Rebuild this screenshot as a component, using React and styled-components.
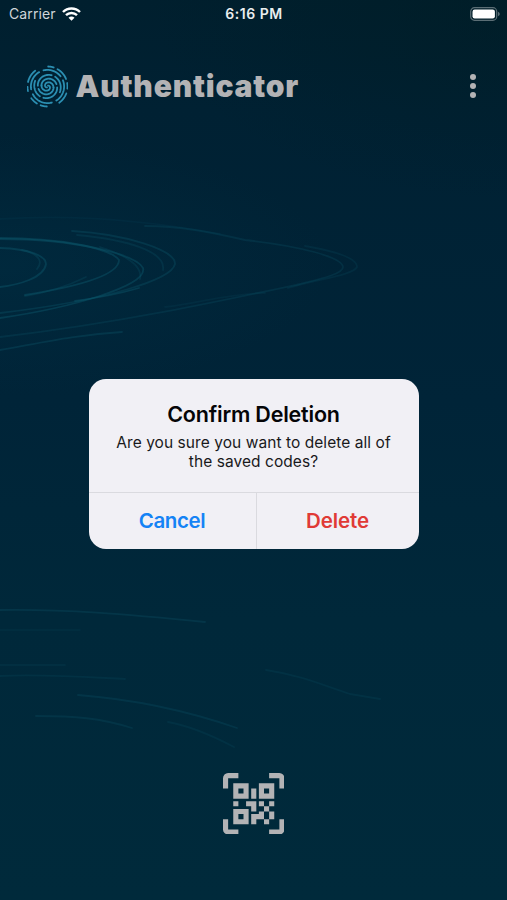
import React from "react"
import styled, { createGlobalStyle } from "styled-components";

const GlobalStyle = createGlobalStyle`
   body {
      margin: 0;
      background: #002537;
      font-family: Inter, "Liberation Sans", sans-serif;
   }
`

const Screen = styled.div`
   position: relative;
   display: flex;
   flex-direction: column;
   width: 507px;
   height: 900px;
   overflow: hidden;
   background:
      radial-gradient(ellipse 330px 130px at 0 265px, rgba(0, 55, 78, .3), transparent),
      radial-gradient(ellipse 360px 200px at 507px 0, rgba(0, 28, 34, .5), transparent),
      linear-gradient(#001f2e 0, #002133 110px, #002438 400px, #00283a 620px, #002a3b 900px);
`

const Backdrop = styled.svg`
   position: absolute;
   left: 0;
   top: 0;
   fill: none;
   stroke-linecap: round;
`

const StatusBar = styled.div`
   position: relative;
   display: grid;
   grid-template-columns: 1fr auto 1fr;
   align-items: center;
   height: 27px;
   padding: 0 7px 0 9px;
   color: #e9edef;
   font-size: 14px;
`

const Carrier = styled.div`
   display: flex;
   align-items: center;
   gap: 6px;
   color: #cfd5d9;
   letter-spacing: .1px;
`

const Time = styled.span`
   font-weight: 600;
   letter-spacing: .5px;
   margin-right: 1px;
`

const Battery = styled.svg`
   justify-self: end;
`

const Header = styled.div`
   position: relative;
   display: flex;
   align-items: center;
   height: 60px;
   margin-top: 29px;
   padding: 0 27px;
`

const Title = styled.h1`
   flex: 1;
   margin: -1px 0 0 7.5px;
   color: #b3b3b5;
   font-size: 30px;
   font-weight: 900;
   line-height: 40px;
   letter-spacing: .8px;
`

const Dots = styled.div`
   display: flex;
   flex-direction: column;
   gap: 2.6px;
   margin-right: 4.5px;
`

const Dot = styled.span`
   width: 6px;
   height: 6px;
   border-radius: 50%;
   background: #b3b3b5;
`

const Body = styled.div`
   position: relative;
   flex: 1;
   display: flex;
   flex-direction: column;
   align-items: center;
   justify-content: space-between;
   padding: 263px 0 66px;
`

const Dialog = styled.div`
   display: flex;
   flex-direction: column;
   width: 330px;
   height: 170px;
   border-radius: 17px;
   background: #f1f0f5;
   overflow: hidden;
`

const Message = styled.div`
   flex: 1;
   padding-top: 22px;
   color: #050507;
   text-align: center;
`

const Heading = styled.h2`
   margin: 0;
   font-size: 21.5px;
   font-weight: 600;
   line-height: 27px;
   letter-spacing: -.2px;
`

const Text = styled.p`
   margin: 5px auto 0;
   color: #19191b;
   font-size: 15.5px;
   line-height: 19px;
   letter-spacing: .06px;
`

const Actions = styled.div`
   display: flex;
   height: 56px;
   border-top: 1px solid #dadadf;
`

const Action = styled.button`
   flex: ${props => props.$danger ? '0 0 163px' : '1'};
   box-sizing: border-box;
   padding: 0 0 2px;
   border: 0;
   border-left: ${props => props.$danger && '1px solid #dadadf'};
   background: none;
   color: ${props => props.$danger ? '#e03a35' : '#1583f5'};
   font-family: inherit;
   font-size: 20.5px;
   font-weight: 600;
   letter-spacing: ${props => props.$danger ? '-.1px' : '-.4px'};
`

const ScanIcon = styled.svg`
   fill: #b3b3b5;
`

const rings = [
   // upper ripples
   { d: "M0 238C60 238 110 248 119 260C119 276 75 287 25 295", o: .45 },
   { d: "M0 239C75 239 135 254 143 268C148 286 70 308 0 318", o: .45 },
   { d: "M72 231C125 234 176 250 175 264C172 279 110 300 0 313", o: .35 },
   { d: "M77 235C130 240 166 252 163 270", o: .25 },
   { d: "M100 247C125 255 143 266 140 279", o: .25 },
   { d: "M0 248C30 249 46 256 46 264C44 278 18 285 0 287", o: .45 },
   { d: "M22 250C40 254 43 262 37 269", o: .3 },
   { d: "M25 296C50 292 72 284 86 277", o: .25 },
   { d: "M75 301C105 297 125 292 139 288", o: .45 },
   { d: "M0 337C120 323 230 299 300 284C320 279 343 274 343 267C342 257 300 246 245 240C210 232 180 226 145 226", o: .25 },
   { d: "M305 246C340 252 357 259 357 267C353 275 318 279 288 288", o: .2 },
   { d: "M0 350C45 342 75 335 122 332", o: .35 },
   { d: "M165 307C200 303 230 293 265 293", o: .15 },
   { d: "M0 219C75 214 150 221 220 234", o: .12 },
   // lower ripples
   { d: "M0 610C65 609 125 614 205 622", o: .3 },
   { d: "M0 630H80", o: .12 },
   { d: "M0 665H65", o: .15 },
   { d: "M0 676C45 674 85 677 125 679", o: .2 },
   { d: "M78 695C130 699 185 710 237 728", o: .28 },
   { d: "M36 716C75 716 100 718 132 728", o: .25 },
   { d: "M168 722C190 726 215 737 234 747", o: .2 },
   { d: "M266 670C300 675 325 686 350 694L380 699", o: .2 },
]

// ridge from angle a to b (degrees), radius going from r1 to r2
const ridge = (a, b, r1, r2 = r1) => {
   const points = []
   for (let i = 0; i <= 24; i++) {
      const t = (a + (b - a) * i / 24) * Math.PI / 180
      const r = r1 + (r2 - r1) * i / 24
      points.push(`${(r * Math.cos(t)).toFixed(2)} ${(r * Math.sin(t)).toFixed(2)}`)
   }
   return "M" + points.join("L")
}

const ridges = [
   // the two arms, mirrored through the centre
   ridge(-60, 190, 1, 6.1),
   ridge(120, 370, 1, 6.1),
   ridge(190, 345, 6.1, 9.3),
   ridge(10, 165, 6.1, 9.3),
   ridge(5, 110, 9.7, 12),
   ridge(185, 290, 9.7, 12),
   ridge(128, 205, 12.4, 13.6),
   ridge(308, 385, 12.4, 13.6),
   // outer rings
   ridge(170, 240, 16.6),
   ridge(256, 322, 16.6),
   ridge(338, 418, 16.6),
   ridge(75, 152, 16.6),
   ridge(167, 179, 20),
   ridge(193, 232, 20),
   ridge(272, 288, 20),
   ridge(300, 338, 20),
   ridge(350, 366, 20),
   ridge(20, 54, 20),
   ridge(92, 110, 20),
   ridge(122, 144, 20),
]

const Fingerprint = () => (
   <svg width="41" height="43" viewBox="-20.5 -21.5 41 43" fill="none" stroke="#2b8fb2" strokeWidth="1.8" strokeLinecap="round">
      {ridges.map(d => <path key={d} d={d} />)}
   </svg>
)

const App = () => {
   return (
      <Screen>
         <GlobalStyle />
         <Backdrop width="507" height="900">
            {rings.map(ring => (
               <path key={ring.d} d={ring.d} stroke="#0c566b" strokeWidth="1.8" opacity={ring.o} />
            ))}
         </Backdrop>

         <StatusBar>
            <Carrier>
               Carrier
               <svg width="19" height="14" viewBox="0 0 19 14" fill="none" stroke="#fff" strokeWidth="2.4">
                  <path d="M1 5C5.6 .3 13.4 .3 18 5" />
                  <path d="M4 8.2C7 5.2 12 5.2 15 8.2" />
                  <path d="M9.5 13.7L6.5 10.7C8.2 9.2 10.8 9.2 12.5 10.7Z" fill="#fff" stroke="none" />
               </svg>
            </Carrier>
            <Time>6:16 PM</Time>
            <Battery width="30" height="14" viewBox="0 0 30 14">
               <rect x=".7" y=".7" width="26" height="12.6" rx="3.8" fill="none" stroke="#5b6e75" strokeWidth="1.2" />
               <rect x="2.5" y="2.5" width="22.4" height="9" rx="2.2" fill="#fff" />
               <path d="M28 4.8C30.3 5.6 30.3 8.4 28 9.2Z" fill="#5b6e75" />
            </Battery>
         </StatusBar>

         <Header>
            <Fingerprint />
            <Title>Authenticator</Title>
            <Dots>
               <Dot />
               <Dot />
               <Dot />
            </Dots>
         </Header>

         <Body>
            <Dialog>
               <Message>
                  <Heading>Confirm Deletion</Heading>
                  <Text>Are you sure you want to delete all of<br />the saved codes?</Text>
               </Message>
               <Actions>
                  <Action>Cancel</Action>
                  <Action $danger>Delete</Action>
               </Actions>
            </Dialog>

            <ScanIcon width="61.5" height="61.5" viewBox="0 0 24 24">
               <path d="M4,4H10V10H4V4M20,4V10H14V4H20M14,15H16V13H14V11H16V13H18V11H20V13H18V15H20V18H18V20H16V18H13V20H11V16H14V15M16,15V18H18V15H16M4,20V14H10V20H4M6,6V8H8V6H6M16,6V8H18V6H16M6,16V18H8V16H6M4,11H6V13H4V11M9,11H13V15H11V13H9V11M11,6H13V10H11V6M2,2V6H0V2A2,2 0 0,1 2,0H6V2H2M22,0A2,2 0 0,1 24,2V6H22V2H18V0H22M2,18V22H6V24H2A2,2 0 0,1 0,22V18H2M22,22V18H24V22A2,2 0 0,1 22,24H18V22H22Z" />
            </ScanIcon>
         </Body>
      </Screen>
   )
}

export default App
